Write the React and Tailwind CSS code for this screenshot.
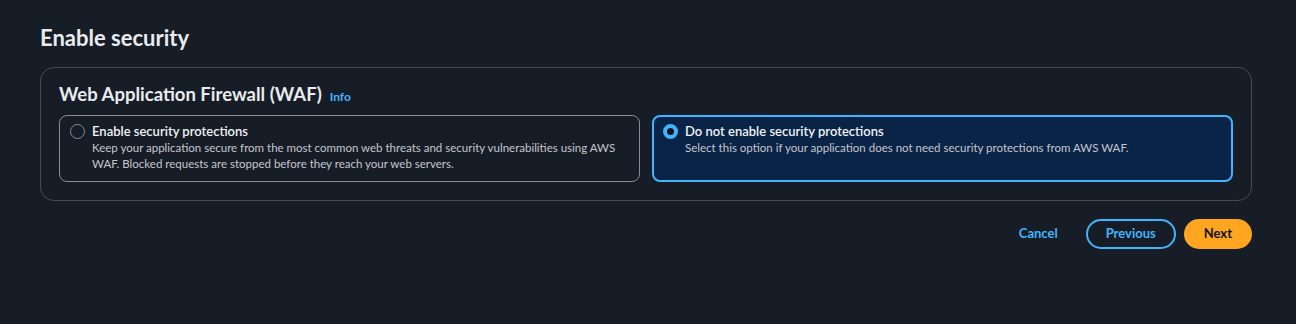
import { useState } from 'react';

const options = [
	{
		id: 'enable',
		label: 'Enable security protections',
		description:
			'Keep your application secure from the most common web threats and security vulnerabilities using AWS WAF. Blocked requests are stopped before they reach your web servers.',
	},
	{
		id: 'disable',
		label: 'Do not enable security protections',
		description: 'Select this option if your application does not need security protections from AWS WAF.',
	},
];

const App = () => {
	const [selected, setSelected] = useState('disable');

	return (
		<div className="min-h-[324px] bg-[#161d26] pl-10 pr-[44px] pt-6 text-[#e9ebed] font-['Lato','Noto_Sans',sans-serif]">
			<h1 className="text-[22px] font-bold leading-[28px]">Enable security</h1>

			<div className="mt-[15px] rounded-[14px] border border-[#414d5c] px-[18px] pt-[14px] pb-[18px]">
				<div className="flex items-baseline gap-2">
					<h2 className="text-[18.5px] font-bold leading-[24px]">Web Application Firewall (WAF)</h2>
					<a href="#" className="text-[12px] font-bold text-[#42b4ff]">
						Info
					</a>
				</div>

				<div className="mt-[9px] grid grid-cols-2 gap-3">
					{options.map((opt) => {
						const active = selected === opt.id;
						return (
							<label
								key={opt.id}
								onClick={() => setSelected(opt.id)}
								className={
									active
										? 'flex h-[67px] cursor-pointer gap-[7px] rounded-[8px] border-2 border-[#42b4ff] bg-[#0a2447] pl-[9px] pr-[10px] pt-[6px]'
										: 'flex h-[67px] cursor-pointer gap-[7px] rounded-[8px] border border-[#8c8c94] pl-[10px] pr-[11px] pt-[7px]'
								}
							>
								<span
									className={
										active
											? 'mt-[1px] h-[15px] w-[15px] shrink-0 rounded-full border-[4px] border-[#42b4ff] bg-[#0f141a]'
											: 'mt-[1px] h-[15px] w-[15px] shrink-0 rounded-full border-[1.5px] border-[#8c8c94]'
									}
								/>
								<span className="flex flex-col">
									<span className="text-[13px] font-semibold leading-[17px] text-[#f0f1f2]">{opt.label}</span>
									<span className="text-[11.5px] leading-[16px] text-[#c6c6cd]">{opt.description}</span>
								</span>
							</label>
						);
					})}
				</div>
			</div>

			<div className="mt-[18px] flex items-center justify-end gap-2">
				<button className="px-5 text-[13px] font-bold text-[#42b4ff]">Cancel</button>
				<button className="h-[30px] rounded-full border-2 border-[#42b4ff] px-[18px] text-[13px] font-bold text-[#42b4ff]">
					Previous
				</button>
				<button className="h-[30px] rounded-full bg-[#ffa51f] px-5 text-[13px] font-bold text-[#0f141a]">Next</button>
			</div>
		</div>
	);
};

export default App;
